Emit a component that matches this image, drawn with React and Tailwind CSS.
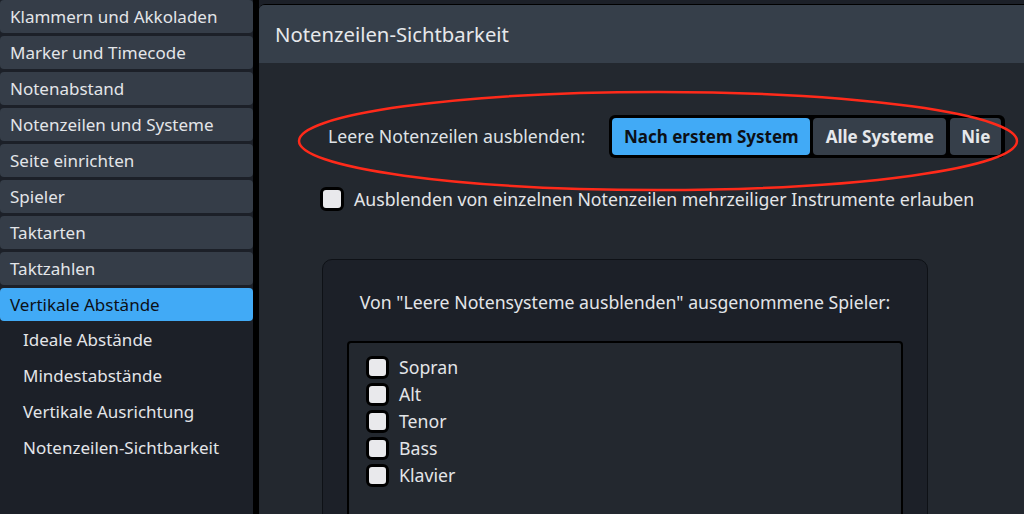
import React from 'react'

const sections = [
    'Klammern und Akkoladen',
    'Marker und Timecode',
    'Notenabstand',
    'Notenzeilen und Systeme',
    'Seite einrichten',
    'Spieler',
    'Taktarten',
    'Taktzahlen',
]

const subSections = ['Ideale Abstände', 'Mindestabstände', 'Vertikale Ausrichtung', 'Notenzeilen-Sichtbarkeit']

const players = ['Sopran', 'Alt', 'Tenor', 'Bass', 'Klavier']

function Box({ size = 'w-[24px] h-[24px]' }) {
    return <span className={`${size} shrink-0 rounded-[6px] border-[3px] border-black bg-[#e9e9ec]`} />
}

const App = () => {
    return (
        <main
            className="flex h-[514px] w-[1024px] overflow-hidden bg-[#1c2028] text-[17px] text-[#e3e5e8]"
            style={{ fontFamily: '"Noto Sans", Lato, sans-serif' }}
        >
            <aside className="flex w-[253px] shrink-0 flex-col gap-[3px] bg-[#1c2028]">
                {sections.map((name) => (
                    <div key={name} className="flex h-[33px] items-center rounded-[4px] bg-[#353d48] px-[10px]">
                        {name}
                    </div>
                ))}
                <div className="flex h-[33px] items-center rounded-[4px] bg-[#41aaf6] px-[10px] text-[#0c1016]">
                    Vertikale Abstände
                </div>
                <div className="-mt-[2px] flex flex-col">
                    {subSections.map((name) => (
                        <div key={name} className="flex h-[36px] items-center pl-[23px]">
                            {name}
                        </div>
                    ))}
                </div>
            </aside>

            <div className="w-[6px] shrink-0 bg-black" />

            <section className="relative mt-[4px] flex flex-1 flex-col overflow-hidden rounded-tl-[6px] border-t border-black bg-[#23282f] text-[17.7px]">
                <header className="flex h-[58px] shrink-0 items-center bg-[#363f4a] px-[16px] text-[20.3px] text-[#e6e8eb]">
                    Notenzeilen-Sichtbarkeit
                </header>

                <div className="flex flex-col pl-[69px]">
                    <div className="mt-[52px] flex items-center">
                        <span className="mr-[24px] text-[#dfe2e6]">Leere Notenzeilen ausblenden:</span>
                        <div className="flex h-[43px] gap-[3px] rounded-[6px] bg-black p-[3px] pr-[4px] font-bold text-[17px]">
                            <span className="flex w-[198px] items-center justify-center rounded-[4px] bg-[#41aaf6] text-[#0c1016]">
                                Nach erstem System
                            </span>
                            <span className="flex w-[133px] items-center justify-center rounded-[4px] bg-[#363f4a] text-[#e6e8eb]">
                                Alle Systeme
                            </span>
                            <span className="ml-[1px] flex w-[51px] items-center justify-center rounded-[4px] bg-[#363f4a] text-[#e6e8eb]">
                                Nie
                            </span>
                        </div>
                    </div>

                    <label className="mt-[28px] -ml-[8px] flex items-center gap-[10px]">
                        <Box />
                        <span>Ausblenden von einzelnen Notenzeilen mehrzeiliger Instrumente erlauben</span>
                    </label>

                    <div className="mt-[46px] -ml-[6px] flex w-[606px] flex-col rounded-[10px] border border-[#0e1116] bg-[#1c2028] px-[24px] pb-[40px]">
                        <p className="mt-[29px] text-center">Von "Leere Notensysteme ausblenden" ausgenommene Spieler:</p>
                        <div className="mt-[26px] flex h-[200px] flex-col gap-[4px] rounded-[4px] border-2 border-black bg-[#23282f] px-[17px] pt-[13px]">
                            {players.map((p) => (
                                <label key={p} className="flex h-[23px] items-center gap-[10px]">
                                    <Box size="w-[23px] h-[23px]" />
                                    <span>{p}</span>
                                </label>
                            ))}
                        </div>
                    </div>
                </div>

                <svg className="pointer-events-none absolute left-0 top-0" width="765" height="510">
                    <ellipse cx="399" cy="136" rx="359" ry="49" fill="none" stroke="#ff2a1a" strokeWidth="2.5" />
                </svg>
            </section>
        </main>
    )
}

export default App
